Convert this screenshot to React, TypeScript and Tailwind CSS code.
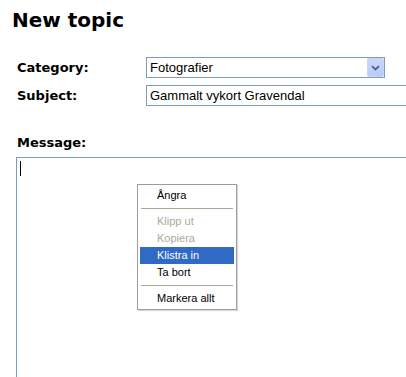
import React from "react";

const verdana = { fontFamily: '"DejaVu Sans", Verdana, sans-serif' };
const arial = { fontFamily: '"Liberation Sans", Arial, sans-serif' };

function MenuItem({
  label,
  disabled,
  active,
}: {
  label: string;
  disabled?: boolean;
  active?: boolean;
}) {
  return (
    <div
      className={`h-[17px] pl-[17px] text-[11px] leading-[17px] ${
        active
          ? "bg-[#316ac5] text-white"
          : disabled
          ? "text-[#aca899]"
          : "text-black"
      }`}
    >
      {label}
    </div>
  );
}

function Sep() {
  return (
    <div className="h-[9px] flex items-center px-[1px]">
      <div className="h-px w-full bg-[#aca899]" />
    </div>
  );
}

export default function App() {
  return (
    <div className="relative w-[406px] h-[377px] overflow-hidden bg-white text-black">
      <h1
        className="pl-[12px] pt-[8px] text-[20px] leading-[24px] font-bold"
        style={verdana}
      >
        New topic
      </h1>

      <div className="mt-[25px] pl-[17px] grid grid-cols-[129px_1fr] gap-y-[7px]">
        <div
          className="h-[21px] text-[13px] leading-[21px] font-bold"
          style={verdana}
        >
          Category:
        </div>
        <div
          className="w-[239px] h-[21px] border border-[#7f9db9] flex items-center bg-white"
          style={arial}
        >
          <span className="flex-1 pl-[3px] text-[13px] leading-[19px]">
            Fotografier
          </span>
          <div className="w-[17px] h-[19px] bg-gradient-to-b from-[#cad7fb] to-[#b8cbf8] border border-[#c7d5f7] rounded-[2px] flex items-center justify-center">
            <svg width="9" height="6" viewBox="0 0 9 6">
              <path
                d="M1 1.2 L4.5 4.5 L8 1.2"
                fill="none"
                stroke="#4d6185"
                strokeWidth="1.8"
              />
            </svg>
          </div>
        </div>

        <div
          className="h-[21px] text-[13px] leading-[21px] font-bold"
          style={verdana}
        >
          Subject:
        </div>
        <div
          className="w-[300px] h-[21px] border border-[#7f9db9] pl-[3px] text-[13px] leading-[19px]"
          style={arial}
        >
          Gammalt vykort Gravendal
        </div>
      </div>

      <div
        className="mt-[26px] pl-[17px] h-[21px] text-[13px] leading-[21px] font-bold"
        style={verdana}
      >
        Message:
      </div>

      <div className="mt-[4px] ml-[16px] w-[420px] h-[260px] border border-[#7f9db9] bg-white pl-[3px] pt-[3px]">
        <div className="w-px h-[15px] bg-black" />
      </div>

      <div
        className="absolute left-[137px] top-[184px] w-[100px] border border-[#9d9da1] bg-white p-[2px] shadow-[1px_1px_1px_rgba(0,0,0,0.15)]"
        style={{ fontFamily: 'Tahoma, "Liberation Sans", Arial, sans-serif' }}
      >
        <MenuItem label="Ångra" />
        <Sep />
        <MenuItem label="Klipp ut" disabled />
        <MenuItem label="Kopiera" disabled />
        <MenuItem label="Klistra in" active />
        <MenuItem label="Ta bort" />
        <Sep />
        <MenuItem label="Markera allt" />
      </div>
    </div>
  );
}
